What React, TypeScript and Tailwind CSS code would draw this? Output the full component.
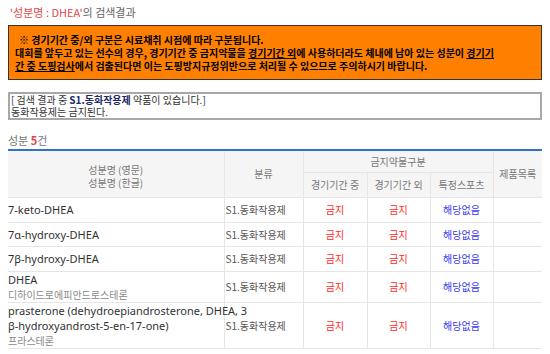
import React from 'react';

const KR = { fontFamily: '"Noto Sans CJK KR", "Noto Sans", sans-serif' };
const EN = { fontFamily: '"Noto Sans", "Noto Sans CJK KR", sans-serif' };

interface Row {
  en: string[];
  ko?: string;
  h: string;
}

const rows: Row[] = [
  { en: ['7-keto-DHEA'], h: 'h-[25px]' },
  { en: ['7α-hydroxy-DHEA'], h: 'h-[24px]' },
  { en: ['7β-hydroxy-DHEA'], h: 'h-[25px]' },
  { en: ['DHEA'], ko: '디하이드로에피안드로스테론', h: 'h-[30px]' },
  {
    en: ['prasterone (dehydroepiandrosterone, DHEA, 3', 'β-hydroxyandrost-5-en-17-one)'],
    ko: '프라스테론',
    h: 'h-[45px]',
  },
];

export default function App() {
  return (
    <div className="w-[550px] h-[354px] bg-white px-2 overflow-hidden" style={KR}>
      {/* Title */}
      <div className="pt-[5px] pl-[2px] text-[11px] leading-[15px]">
        <span className="text-[#e04848]">'성분명 : DHEA'</span>
        <span className="text-[#666]">의 검색결과</span>
      </div>

      {/* Notice */}
      <div className="mt-[5px] h-[55px] border border-[#333] bg-[#ff8000] pl-[6px] pt-[7px] text-[10px] font-bold leading-[13px] text-black">
        <div className="whitespace-nowrap pl-[4px]">※ 경기기간 중/외 구분은 시료채취 시점에 따라 구분됩니다.</div>
        <div className="whitespace-nowrap">
          대회를 앞두고 있는 선수의 경우, 경기기간 중 금지약물을 <u>경기기간 외</u>에 사용하더라도 체내에 남아 있는 성분이{' '}
          <u>경기기</u>
        </div>
        <div className="whitespace-nowrap">
          <u>간 중 도핑검사</u>에서 검출된다면 이는 도핑방지규정위반으로 처리될 수 있으므로 주의하시기 바랍니다.
        </div>
      </div>

      {/* Info box */}
      <div className="mt-[12px] h-[28px] border-2 border-[#a8a8a8] pl-[1px] text-[10px] leading-[12px] text-[#333]">
        <div className="whitespace-nowrap">
          [ 검색 결과 중 <b className="text-[#1c2a66]">S1.동화작용제</b> 약품이 있습니다.]
        </div>
        <div className="whitespace-nowrap">동화작용제는 금지된다.</div>
      </div>

      {/* Count */}
      <div className="mt-[13px] pb-[2px] text-[11px] leading-[14px] text-[#777]">
        성분 <b className="text-[#e84040]">5</b>건
      </div>

      {/* Table */}
      <table className="w-[534px] table-fixed border-collapse border-t-2 border-[#3470c4] text-[10px]">
        <colgroup>
          <col className="w-[216px]" />
          <col className="w-[79px]" />
          <col className="w-[64px]" />
          <col className="w-[63px]" />
          <col className="w-[63px]" />
          <col className="w-[49px]" />
        </colgroup>
        <thead className="bg-[#f5f5f5] text-[#777]">
          <tr className="h-[22px]">
            <th rowSpan={2} className="border border-t-0 border-l-0 border-[#e6e6e6] font-normal leading-[13px] pt-[5px]">
              성분명 (영문)
              <br />
              성분명 (한글)
            </th>
            <th rowSpan={2} className="border border-t-0 border-[#e6e6e6] font-normal">분류</th>
            <th colSpan={3} className="border border-t-0 border-[#e6e6e6] font-normal">금지약물구분</th>
            <th rowSpan={2} className="border border-t-0 border-r-0 border-[#e6e6e6] font-normal">제품목록</th>
          </tr>
          <tr className="h-[25px]">
            <th className="border border-[#e6e6e6] font-normal">경기기간 중</th>
            <th className="border border-[#e6e6e6] font-normal">경기기간 외</th>
            <th className="border border-[#e6e6e6] font-normal">특정스포츠</th>
          </tr>
        </thead>
        <tbody>
          {rows.map((r, i) => (
            <tr key={i} className={r.h}>
              <td className="border border-l-0 border-[#e6e6e6] pl-0 leading-[15px]">
                {r.en.map((t, j) => (
                  <div key={j} className="whitespace-nowrap text-[11px] text-[#333]" style={EN}>
                    {t}
                  </div>
                ))}
                {r.ko && <div className="text-[10px] text-[#8a8a8a]">{r.ko}</div>}
              </td>
              <td className="border border-[#e6e6e6] pl-[1px] text-[#555] whitespace-nowrap">S1.동화작용제</td>
              <td className="border border-[#e6e6e6] text-center text-[#ff2a2a]">금지</td>
              <td className="border border-[#e6e6e6] text-center text-[#ff2a2a]">금지</td>
              <td className="border border-[#e6e6e6] text-center text-[#3a3af0]">해당없음</td>
              <td className="border border-r-0 border-[#e6e6e6]"></td>
            </tr>
          ))}
        </tbody>
      </table>
    </div>
  );
}
